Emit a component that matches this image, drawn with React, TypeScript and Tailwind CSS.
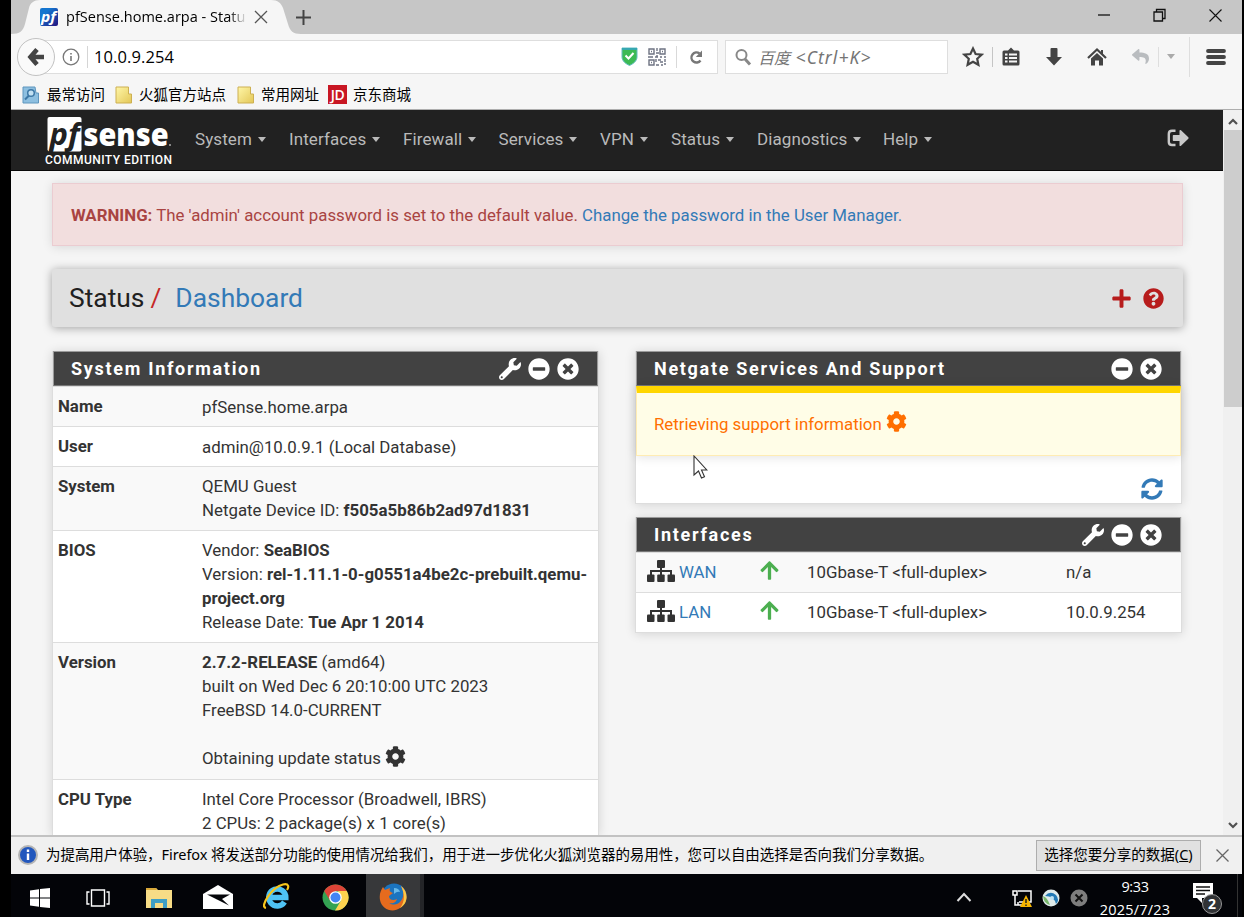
import React from "react";
import { FaWrench, FaMinusCircle, FaTimesCircle, FaCog, FaSyncAlt, FaArrowUp, FaPlus, FaQuestionCircle, FaReply } from "react-icons/fa";

const CJK = "font-['Noto_Sans','Noto_Sans_CJK_SC',sans-serif]";

function Chrome() {
  return (
    <div className="shrink-0">
      <div className="flex h-[34px] bg-[#c6c6c6]">
        <div className="relative w-[285px]">
          <svg className="absolute inset-0" width="290" height="34">
            <path d="M0 34C9 34 12 31 14 24L18 8C19 3 23 0 29 0H260C267 0 270 3 272 8L277 24C279 31 282 34 290 34Z" fill="#f6f6f6" />
          </svg>
          <div className="relative flex h-[34px] items-center pl-[29px]">
            <svg className="overflow-visible" width="18" height="18" viewBox="0 0 18 18">
              <defs><linearGradient id="fav" x2="1" y2="1"><stop offset=".3" stopColor="#1475cf" /><stop offset="1" stopColor="#25107c" /></linearGradient></defs>
              <rect width="18" height="18" rx="2" fill="url(#fav)" />
              <text x="1" y="13.5" fontSize="15" fontStyle="italic" fontWeight="700" fill="#fff" textLength="15" lengthAdjust="spacingAndGlyphs" fontFamily="Open Sans, sans-serif">pf</text>
            </svg>
            <span className="ml-[8px] w-[181px] overflow-hidden whitespace-nowrap bg-gradient-to-r from-black from-90% to-transparent bg-clip-text font-['Open_Sans',sans-serif] text-[14.5px] tracking-[0.02px] text-transparent">pfSense.home.arpa - Statu</span>
            <svg className="ml-[7px]" width="14" height="14" viewBox="0 0 14 14" stroke="#555" strokeWidth="1.3"><path d="M1 1L13 13M13 1L1 13" /></svg>
          </div>
        </div>
        <svg className="mt-[10px]" width="15" height="15" viewBox="0 0 15 15" stroke="#444" strokeWidth="2"><path d="M7.500 0V15M0 7.500H15" /></svg>
        <div className="ml-auto flex items-center gap-[43px] pb-[4px] pr-[20px]">
          <svg width="12" height="12" stroke="#111" strokeWidth="1.3"><path d="M0 6H12" /></svg>
          <svg width="13" height="14" fill="none" stroke="#111" strokeWidth="1.3"><path d="M1 4H9.500V13H1ZM3.500 4V1.500H12V10.500H9.500" /></svg>
          <svg width="13" height="13" stroke="#111" strokeWidth="1.1"><path d="M.5 .5L12.500 12.500M12.500 .5L.5 12.500" /></svg>
        </div>
      </div>
      <div className="flex h-[45px] items-center bg-[#f6f6f6]">
        <div className="relative z-10 ml-[6px] flex size-[38px] items-center justify-center rounded-full border border-[#c2c2c2] bg-[#fafafa]">
          <svg width="18" height="18" viewBox="0 0 18 18"><path d="M10 1.500L3.500 9L10 16.500M4 9H17" fill="none" stroke="#444" strokeWidth="4.600" /></svg>
        </div>
        <div className="-ml-[14px] flex h-[34px] w-[677px] items-center border border-[#dedede] bg-white pl-[20px]">
          <svg width="18" height="18" viewBox="0 0 18 18" fill="none" stroke="#777"><circle cx="9" cy="9" r="7.800" strokeWidth="1.300" /><path d="M9 8V13M9 5V6.500" strokeWidth="1.600" /></svg>
          <div className="ml-[7px] h-[22px] w-px bg-[#d5d5d5]" />
          <span className="ml-[6px] pt-[2px] font-['Open_Sans',sans-serif] text-[16.5px] tracking-[0.1px] text-black">10.0.9.254</span>
          <svg className="ml-auto" width="17" height="19" viewBox="0 0 17 19"><path d="M1 1H16V10C16 14 12 17 8.500 18.500C5 17 1 14 1 10Z" fill="#3cba54" stroke="#64bcc4" /><path d="M1 1H16V3H1Z" fill="#36a8b0" /><path d="M4.500 8.500L7.500 11.500L12.500 6" fill="none" stroke="#fff" strokeWidth="2" /></svg>
          <svg className="ml-[10px]" width="18" height="18" viewBox="0 0 18 18" fill="none" stroke="#6e7382" strokeWidth="1.400">
            <path d="M1 1H6V6H1ZM12 1H17V6H12ZM1 12H6V17H1Z" />
            <path d="M3 3.500H4M14 3.500H15M3 14.500H4M9 0V3M8 5H11M9 7V9M0 9H5M7 9H10M12 9H14M16 9H18M8 11V14M10 12H13M12 14H15M17 11V14M8 17H11M13 17H15M16 16H18" />
          </svg>
          <div className="ml-[10px] h-[22px] w-px bg-[#d9d9d9]" />
          <svg className="mr-[13px] ml-[12px]" width="15" height="16" viewBox="0 0 15 16"><path d="M11.500 11.500A5 5 0 1 1 10.500 4.500" fill="none" stroke="#777" strokeWidth="2.400" /><path d="M13 1.500V8H6.800Z" fill="#777" /></svg>
        </div>
        <div className="ml-[7px] flex h-[34px] w-[223px] items-center border border-[#dedede] bg-white pl-[9px]">
          <svg width="17" height="18" viewBox="0 0 17 18" fill="none" stroke="#888"><circle cx="6.500" cy="7" r="5" strokeWidth="2" /><path d="M10 11L15 16.500" strokeWidth="3" /></svg>
          <span className={`${CJK} ml-[6px] whitespace-pre pt-px text-[16px] italic text-[#757575]`}>百度<span className="text-[17.5px] tracking-[1.05px]"> &lt;Ctrl+K&gt;</span></span>
        </div>
        <svg className="ml-[14px]" width="22" height="22" viewBox="0 0 22 22" fill="none" stroke="#444" strokeWidth="2.200"><path d="M11 2.500L13.600 8L19.600 8.700L15.200 12.800L16.400 18.800L11 15.800L5.600 18.800L6.800 12.800L2.400 8.700L8.400 8Z" /></svg>
        <div className="ml-[8px] h-[20px] w-px bg-[#c5c5c5]" />
        <svg className="ml-[9px]" width="18" height="20" viewBox="0 0 18 20"><path d="M2 3.500H6L9 .5L12 3.500H16Q17.500 3.500 17.500 5V17Q17.500 18.500 16 18.500H2Q.5 18.500 .5 17V5Q.5 3.500 2 3.500Z" fill="#444" /><path d="M3 6.500H5.500V8.500H3ZM7 6.500H15V8.500H7ZM3 10H5.500V12H3ZM7 10H15V12H7ZM3 13.500H5.500V15.500H3ZM7 13.500H15V15.500H7Z" fill="#f6f6f6" /></svg>
        <svg className="ml-[25px]" width="18" height="20" viewBox="0 0 18 20"><path d="M5.500 2Q5.500 1 6.500 1H11.500Q12.500 1 12.500 2V10H17L9 18.500L1 10H5.500Z" fill="#444" /></svg>
        <svg className="ml-[24px]" width="20" height="20" viewBox="0 0 20 20"><path d="M1 11L10 2.500L19 11" fill="none" stroke="#444" strokeWidth="2.200" /><path d="M4 11.500L10 6L16 11.500V18.500H12V13.500H8V18.500H4ZM14 3H16V8L14 6Z" fill="#444" /></svg>
        <FaReply className="ml-[25px] text-[17px] text-[#b9bcbf]" />
        <div className="ml-[9px] h-[20px] w-px bg-[#dedede]" />
        <div className="ml-[8px] border-x-[4.500px] border-t-[5px] border-x-transparent border-t-[#aaa]" />
        <div className="ml-[14px] h-[40px] w-px bg-[#dedede]" />
        <svg className="ml-[16px]" width="20" height="18" stroke="#444" strokeWidth="3.800" strokeLinecap="round"><path d="M2 3H18M2 9H18M2 15H18" /></svg>
      </div>
      <div className={`${CJK} flex h-[31px] items-center border-b border-[#aeaeae] bg-[#f6f6f6] pl-[11px] pt-px text-[14.5px] text-black`}>
        <svg width="18" height="18" viewBox="0 0 18 18"><path d="M1 1H13L14 7H16.500V17H1Z" fill="#8dbfe0" stroke="#5f96be" /><circle cx="9" cy="7" r="3.300" fill="#c3e1f3" stroke="#3d78a6" strokeWidth="1.500" /><path d="M7 9.500L3 13.500" stroke="#3d78a6" strokeWidth="2" /></svg>
        <span className="ml-[7px]">最常访问</span>
        <Folder className="ml-[10px]" />
        <span className="ml-[6px]">火狐官方站点</span>
        <Folder className="ml-[11px]" />
        <span className="ml-[6px]">常用网址</span>
        <span className="ml-[9px] flex h-[19px] w-[19px] items-center justify-center bg-[#c81623] font-['Open_Sans',sans-serif] text-[14px] font-semibold tracking-[-0.5px] text-white">JD</span>
        <span className="ml-[6px]">京东商城</span>
      </div>
    </div>
  );
}

function Folder({ className }: { className: string }) {
  return <svg className={className} width="18" height="18" viewBox="0 0 18 18"><defs><linearGradient id="fold" x2="1" y2="1"><stop stopColor="#fff6a8" /><stop offset="1" stopColor="#e3c757" /></linearGradient></defs><path d="M1 1H13.500V8H16.500V17H1Z" fill="url(#fold)" stroke="#cdb052" /></svg>;
}

const MENU = [
  ["System", "w-[94px]"], ["Interfaces", "w-[114px]"], ["Firewall", "w-[95.500px]"], ["Services", "w-[101.500px]"],
  ["VPN", "w-[71px]"], ["Status", "w-[86px]"], ["Diagnostics", "w-[126px]"], ["Help", "w-[60px]"],
];

function NavBar() {
  return (
    <div className="flex h-[61px] shrink-0 border-b border-[#080808] bg-[#212121]">
      <svg className="ml-[30px] mt-[5px] overflow-visible" width="136" height="54" viewBox="-3 -1 136 54">
        <rect x="3.500" y="1" width="34" height="34.500" rx="2" fill="#fff" />
        <text x="5.500" y="28.500" fontSize="30" fontWeight="700" fontStyle="italic" fill="#212121" textLength="30" lengthAdjust="spacingAndGlyphs" fontFamily="Open Sans, sans-serif">pf</text>
        <text x="39.500" y="29.500" fontSize="31" fontWeight="800" fill="#fff" textLength="85" lengthAdjust="spacingAndGlyphs" fontFamily="Open Sans, sans-serif">sense</text>
        <circle cx="126" cy="29" r="1" fill="#aaa" />
        <text x="1" y="48" fontSize="12" fontWeight="500" fill="#fff" textLength="127" fontFamily="Roboto, sans-serif">COMMUNITY EDITION</text>
      </svg>
      <div className="ml-[18px] flex h-[58px] items-center text-[17px] tracking-[0.1px] text-[#bababa]">
        {MENU.map(([n, w]) => (
          <div key={n} className={`flex shrink-0 items-center ${w}`}>
            {n}
            <span className="mt-px ml-[6px] border-x-[4.500px] border-t-[5px] border-x-transparent border-t-[#bababa]" />
          </div>
        ))}
      </div>
      <svg className="mt-[19px] mr-[34px] ml-auto" width="22" height="18" viewBox="0 0 22 18">
        <path d="M8.500 1.800H5Q1.800 1.800 1.800 5V13Q1.800 16 5 16H8.500" fill="none" stroke="#c9c9c9" strokeWidth="2.400" />
        <path d="M6.500 6H12.500V1.500Q13 .5 14 1.300L21.300 8.200Q22 9 21.300 9.800L14 16.700Q13 17.500 12.500 16.500V12H6.500Q5.800 12 5.800 11.300V6.700Q5.800 6 6.500 6Z" fill="#c9c9c9" />
      </svg>
    </div>
  );
}

function Heading({ title, wrench }: { title: string; wrench?: boolean }) {
  return (
    <div className="flex h-[35px] shrink-0 items-center border border-[#9a9a9a] border-b-[#777] bg-[#424242] pr-[18px] pl-[17px] text-white">
      <span className="mt-[2px] text-[18px] font-bold tracking-[1.7px]">{title}</span>
      <div className="ml-auto flex gap-[7px] text-[22px]">
        {wrench && <FaWrench />}
        <FaMinusCircle />
        <FaTimesCircle />
      </div>
    </div>
  );
}

const rowBase = "flex shrink-0 border-t border-[#ddd] pl-[5px] ";

function Row({ label, h, alt, children }: { label: string; h: string; alt?: boolean; children: React.ReactNode }) {
  return (
    <div className={rowBase + h + (alt ? " bg-[#f9f9f9]" : " bg-white")}>
      <div className="w-[144px] pt-[7px] font-bold">{label}</div>
      <div className="pt-[8px]">{children}</div>
    </div>
  );
}

function IfRow({ name, ip, alt }: { name: string; ip: string; alt?: boolean }) {
  return (
    <div className={"flex h-[40px] items-center border-t border-[#ddd] pl-[11px]" + (alt ? " bg-[#f9f9f9]" : " bg-white")}>
      <svg className="mb-[4px] shrink-0" width="28" height="22" viewBox="0 0 28 22">
        <path d="M14 7V16M4 16V11H24V16" fill="none" stroke="#333" strokeWidth="2" />
        <rect x="10" y="0" width="8" height="8" rx="1" fill="#333" />
        <rect x="0" y="14.500" width="7.500" height="7.500" rx="1" fill="#333" />
        <rect x="10.200" y="14.500" width="7.500" height="7.500" rx="1" fill="#333" />
        <rect x="20.500" y="14.500" width="7.500" height="7.500" rx="1" fill="#333" />
      </svg>
      <span className="ml-[4px] w-[80px] text-[#337ab7]">{name}</span>
      <FaArrowUp className="mb-[4px] text-[21px] text-[#4caf50]" />
      <span className="ml-[27px] w-[259px]">10Gbase-T &lt;full-duplex&gt;</span>
      <span>{ip}</span>
    </div>
  );
}

function Page() {
  return (
    <div className="flex min-h-0 flex-1">
      <div className="flex w-[1212px] flex-col overflow-hidden bg-[#f5f5f5] font-[Roboto,sans-serif] text-[16.83px] leading-[24.1px] text-[#333]">
        <NavBar />
        <div className="mt-[12px] ml-[41px] flex h-[63px] w-[1131px] shrink-0 items-center border border-[#ebccd1] bg-[#f2dede] pl-[18px] pt-px text-[#a94442] shadow-[0_1px_10px_rgba(0,0,0,0.12)]">
          <span className="whitespace-pre"><b>WARNING:</b> The 'admin' account password is set to the default value. <span className="text-[#337ab7]">Change the password in the User Manager.</span></span>
        </div>
        <div className="mt-[23px] ml-[41px] flex h-[58px] w-[1131px] shrink-0 items-center rounded-[3px] bg-[#e0e0e0] pl-[17px] pr-[19px] text-[26.4px] text-[#212121] shadow-[0_1px_10px_rgba(0,0,0,0.35)]">
          <span>Status</span><span className="ml-[6px] text-[#c62828]">/</span><span className="ml-[14px] text-[#337ab7]">Dashboard</span>
          <div className="ml-auto flex gap-[11px] pt-px text-[21px] text-[#b71c1c]"><FaPlus /><FaQuestionCircle /></div>
        </div>
        <div className="mt-[24px] ml-[41px] flex min-h-0 flex-1 gap-[37px]">
          <div className="flex w-[547px] flex-col border-x border-[#ddd] bg-white shadow-[0_1px_10px_rgba(0,0,0,0.14)]">
            <Heading title="System Information" wrench />
            <Row label="Name" h="h-[40px]" alt>pfSense.home.arpa</Row>
            <Row label="User" h="h-[40px]">admin@10.0.9.1 (Local Database)</Row>
            <Row label="System" h="h-[64px]" alt>
              <div className="-mt-px">QEMU Guest<br />Netgate Device ID: <b>f505a5b86b2ad97d1831</b></div>
            </Row>
            <Row label="BIOS" h="h-[112px]">
              <div className="-mt-px">Vendor: <b>SeaBIOS</b><br />Version: <b>rel-1.11.1-0-g0551a4be2c-prebuilt.qemu-<br />project.org</b><br />Release Date: <b>Tue Apr 1 2014</b></div>
            </Row>
            <Row label="Version" h="h-[137px]" alt>
              <div className="-mt-px"><b>2.7.2-RELEASE</b> (amd64)<br />built on Wed Dec 6 20:10:00 UTC 2023<br />FreeBSD 14.0-CURRENT<br /><br />Obtaining update status <FaCog className="mb-[6px] inline text-[21px]" /></div>
            </Row>
            <Row label="CPU Type" h="h-[90px]">
              <div className="-mt-px">Intel Core Processor (Broadwell, IBRS)<br />2 CPUs: 2 package(s) x 1 core(s)</div>
            </Row>
          </div>
          <div className="-ml-px w-[547px]">
            <div className="relative h-[153px] border border-t-0 border-[#ddd] bg-white shadow-[0_1px_10px_rgba(0,0,0,0.14)]">
              <Heading title="Netgate Services And Support" />
              <div className="flex h-[70px] items-center border border-t-[7px] border-[#ffecb3] border-t-[#ffd600] bg-[#fffde7] pl-[17px] text-[#ff6f00] shadow-[0_1px_10px_rgba(0,0,0,0.12)]">
                Retrieving support information <FaCog className="mb-[6px] ml-[4px] text-[21px]" />
              </div>
              <svg className="absolute top-[104px] left-[57px]" width="15" height="24" viewBox="0 0 15 24"><path d="M1 1V20L5.500 16L8.500 23L11.500 21.800L8.500 15H13.800Z" fill="#fff" stroke="#333" strokeWidth="1.100" /></svg>
              <FaSyncAlt className="mt-[22px] mr-[18px] ml-auto text-[22px] text-[#337ab7]" />
            </div>
            <div className="mt-[13px] border border-t-0 border-[#ddd] bg-white shadow-[0_1px_10px_rgba(0,0,0,0.14)]">
              <Heading title="Interfaces" wrench />
              <IfRow name="WAN" ip="n/a" alt />
              <IfRow name="LAN" ip="10.0.9.254" />
            </div>
          </div>
        </div>
      </div>
      <div className="flex w-[19px] flex-col items-center bg-[#f0f0f0]">
        <svg className="mt-[8px]" width="10" height="7" fill="none" stroke="#505050" strokeWidth="2.200"><path d="M1 6L5 2L9 6" /></svg>
        <div className="mt-[5px] h-[277px] w-[18px] bg-[#cdcdcd]" />
        <svg className="mt-auto mb-[6px]" width="10" height="7" fill="none" stroke="#505050" strokeWidth="2.200"><path d="M1 1L5 5L9 1" /></svg>
      </div>
    </div>
  );
}

function NoticeBar() {
  return (
    <div className={`${CJK} flex h-[39px] shrink-0 items-center border-t-2 border-[#c2c2c2] bg-[#f0f0f0] pb-px pl-[7px] text-[14.5px] text-black`}>
      <svg width="20" height="20" viewBox="0 0 20 20"><circle cx="10" cy="10" r="9" fill="#2257bd" stroke="#b5b5b5" strokeWidth="2" /><path d="M10 8.500V15M10 4.500V7" stroke="#fff" strokeWidth="2.400" /></svg>
      <span className="ml-[8px] whitespace-nowrap tracking-[-0.06px]">为提高用户体验，Firefox 将发送部分功能的使用情况给我们，用于进一步优化火狐浏览器的易用性，您可以自由选择是否向我们分享数据。</span>
      <div className="ml-auto flex h-[31px] w-[165px] items-center justify-center border border-[#adadad] bg-[#e1e1e1]"><span>选择您要分享的数据(<u>C</u>)</span></div>
      <svg className="mr-[13px] ml-[15px]" width="13" height="13" stroke="#666" strokeWidth="1.300"><path d="M.5 .5L12.500 12.500M12.500 .5L.5 12.500" /></svg>
    </div>
  );
}

function TaskBar() {
  return (
    <div className="flex h-[43px] shrink-0 items-center bg-[#030408] pl-[19px] font-['Open_Sans',sans-serif] text-white">
      <svg className="mt-[4px]" width="20" height="20" viewBox="0 0 20 20" fill="#fff"><path d="M0 2.500L9 1.300V9.500H0ZM10 1.100L20 0V9.500H10ZM0 10.500H9V18.700L0 17.500ZM10 10.500H20V20L10 18.900Z" /></svg>
      <svg className="mt-[4px] ml-[36px]" width="24" height="18" viewBox="0 0 24 18" fill="none" stroke="#fff" strokeWidth="1.400"><path d="M5.500 1H18.500V17H5.500ZM3.500 3H1V15H3.500M20.500 3H23V15H20.500" /></svg>
      <svg className="mt-[4px] ml-[36px]" width="26" height="22" viewBox="0 0 26 22"><path d="M0 1H10L12 3H26V21H0Z" fill="#f7dc86" /><path d="M0 1H10L11 3H0Z" fill="#d9a93a" /><path d="M5 21V12H21V21H17V16H9V21Z" fill="#3e9fc5" /></svg>
      <svg className="mt-[2px] ml-[31px]" width="30" height="24" viewBox="0 0 30 24"><path d="M0 9L15 0L30 9V24H0Z" fill="#fff" /><path d="M4 9.500H27L19 14L26 20.500L14 14.500Z" fill="#05060a" /></svg>
      <svg className="mt-[2px] ml-[30px]" width="27" height="27" viewBox="0 0 27 27"><path d="M21.500 19A8.500 8.500 0 1 1 22.800 14.500H8" fill="none" stroke="#4fc3f4" strokeWidth="5.500" /><path d="M3 25C-4 24 9 4 20 1.500C26 0 26 4 24 7" fill="none" stroke="#f6c51c" strokeWidth="2.200" /></svg>
      <svg className="mt-[4px] ml-[32px]" width="27" height="27" viewBox="0 0 27 27"><circle cx="13.500" cy="13.500" r="13" fill="#34a353" /><path d="M2.200 7A13 13 0 0 1 24.800 7H13.500L8 16.500Z" fill="#dc4437" /><path d="M24.800 7A13 13 0 0 1 13 26.500L19 16.500L16 7Z" fill="#fdd24f" /><circle cx="13.500" cy="13.500" r="6.300" fill="#fff" /><circle cx="13.500" cy="13.500" r="5" fill="#4285f4" /></svg>
      <div className="ml-[17px] flex h-[43px] w-[58px] items-center justify-center border-r-4 border-[#242528] bg-[#37383a] pt-[3px]">
        <svg width="28" height="28" viewBox="0 0 28 28"><circle cx="15" cy="13" r="12.500" fill="#1b74bf" /><path d="M15 5Q20 5 21 9Q18 8 15 11Z" fill="#67b8e8" /><path d="M22 3C29 8 30 20 21 25C14 30 3 27 1 17C0 11 2 7 4 4L6 7L11 5C10 8 11 9 14 10L10 13C10 17 14 18 18 16C16 22 10 20 10 20C18 25 26 17 24 8Z" fill="#e66b1e" /><path d="M22 3C29 8 30 20 21 25C26 19 26 11 22 3Z" fill="#f9c846" /></svg>
      </div>
      <svg className="mt-[2px] ml-auto" width="16" height="10" fill="none" stroke="#ddd" strokeWidth="2"><path d="M1.500 9L8 2L14.500 9" /></svg>
      <svg className="mt-[5px] ml-[40px]" width="20" height="19" viewBox="0 0 20 19"><path d="M6 2H19V13H7M1 2H5V6H1ZM3 6V16H10M6 16V13" fill="none" stroke="#fff" strokeWidth="1.500" /><path d="M14 6L20 18H8Z" fill="#f7b500" /><path d="M14 10V14M14 15.500V17" stroke="#222" strokeWidth="1.500" /></svg>
      <svg className="mt-[4px] ml-[10px]" width="18" height="18" viewBox="0 0 18 18"><circle cx="9" cy="9" r="8.500" fill="#dfeaea" /><path d="M3 7Q8 1 14 6Q18 11 14 15Q12 7 3 7Z" fill="#2279b5" /><path d="M1 7Q5 8 8 16Q2 15 1 7Z" fill="#78b66b" /><circle cx="10" cy="9" r="2" fill="#bde2f2" /></svg>
      <svg className="mt-[4px] ml-[10px]" width="18" height="18" viewBox="0 0 18 18"><circle cx="9" cy="9" r="8.500" fill="#7e7e7e" /><path d="M5.500 5.500L12.500 12.500M12.500 5.500L5.500 12.500" stroke="#111" strokeWidth="2" /></svg>
      <div className="mt-[4px] ml-[10px] w-[74px] text-center text-[14.5px] leading-[23px]"><span className="tracking-[-0.4px]">9:33</span><br /><span className="tracking-[0.2px]">2025/7/23</span></div>
      <div className="relative mt-[2px] ml-[21px] h-[30px] w-[30px]">
        <svg width="20" height="22" viewBox="0 0 20 22"><path d="M0 1H20V16H9V21L4 16H0Z" fill="#fff" /><path d="M3 5H17M3 8.500H17M3 12H12" stroke="#111" strokeWidth="1.500" /></svg>
        <span className="absolute top-[12px] left-[9px] flex size-[20px] items-center justify-center rounded-full border border-[#999] bg-[#303235] text-[14px] font-bold">2</span>
      </div>
      <div className="ml-[14px] h-[43px] w-px bg-[#333]" />
      <div className="w-[4px]" />
    </div>
  );
}

export default function App() {
  return (
    <div className="flex h-[917px] w-[1244px] overflow-hidden bg-black pr-[2px] pl-[11px]">
      <div className="flex w-[1231px] flex-col">
        <Chrome />
        <Page />
        <NoticeBar />
        <TaskBar />
      </div>
    </div>
  );
}
